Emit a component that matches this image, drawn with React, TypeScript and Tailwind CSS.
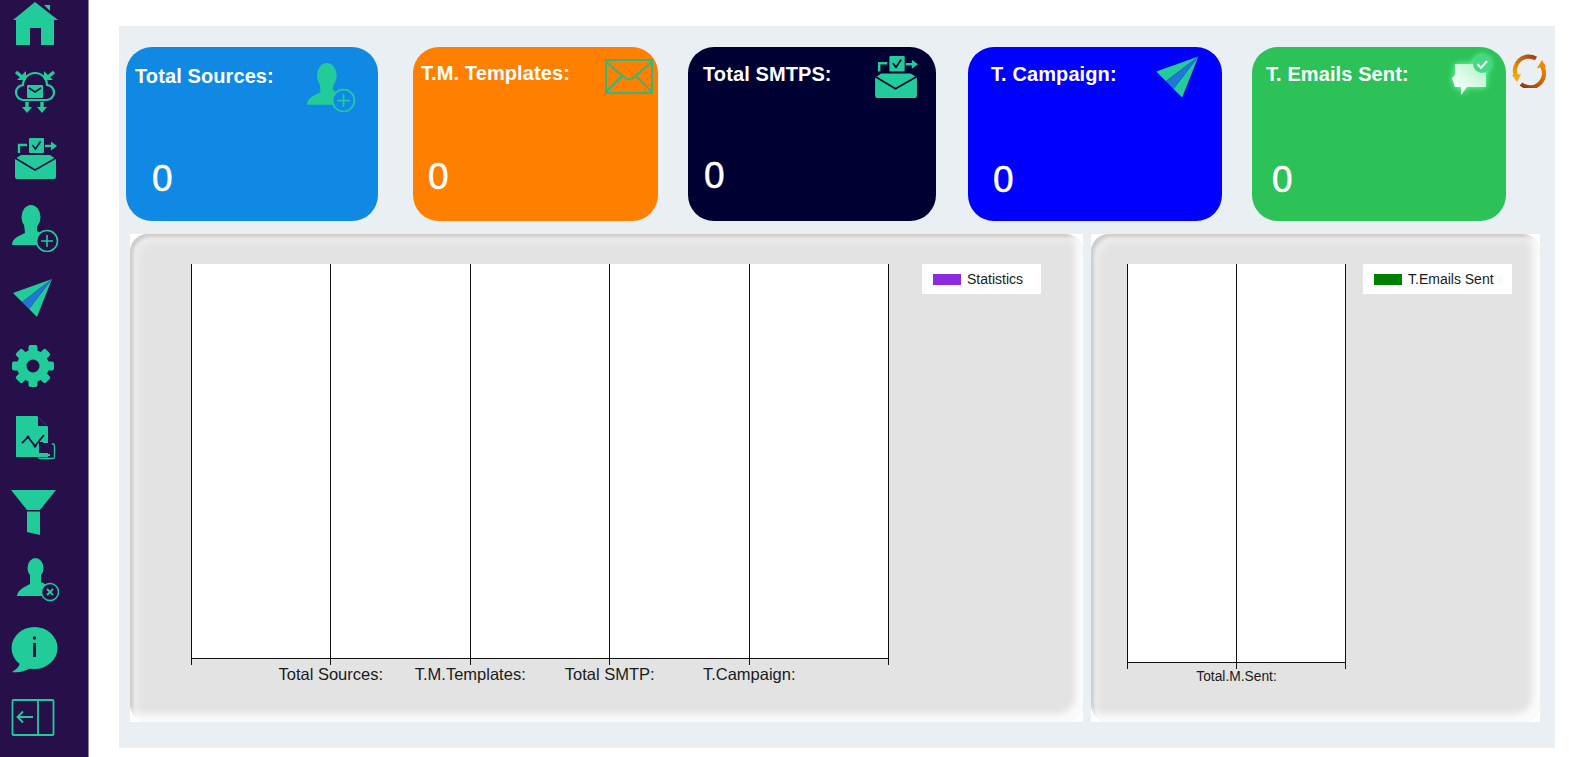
import React from "react";

const GREEN = "#22cc9a";
const SIDE = "#27104a";

type IconProps = { className?: string; cut?: string };

function HomeIcon({ className }: IconProps) {
  return (
    <svg viewBox="0 0 48 48" className={className} fill={GREEN}>
      <path d="M24 3 L47 21 H43 V46 H30 V29 H19 V46 H5 V21 H2 Z" />
      <path d="M33 6 L39 6 L39 12 Z" />
    </svg>
  );
}

function CloudIcon({ className }: IconProps) {
  return (
    <svg viewBox="0 0 48 48" className={className} fill="none" stroke={GREEN} strokeWidth="2.2">
      <path d="M13 33 a7.5 7.5 0 0 1 -1 -15 a12 12 0 0 1 24 0 a7.5 7.5 0 0 1 -1 15 z" />
      <rect x="16" y="18" width="16" height="13" rx="1" fill={GREEN} stroke="none" />
      <path d="M18 21 L24 25 L30 21" stroke={SIDE} strokeWidth="1.6" />
      <path d="M16 35 V41 M31 35 V41" strokeWidth="3.4" />
      <path d="M11 40 H21 L16 46 Z M26 40 H36 L31 46 Z" fill={GREEN} stroke="none" />
      <path d="M5 5 L11 10 M43 5 L37 10" strokeWidth="3.4" />
      <path d="M6 13 H15 V4 Z M42 13 H33 V4 Z" fill={GREEN} stroke="none" />
    </svg>
  );
}

function MailCheckIcon({ className, cut = SIDE }: IconProps) {
  return (
    <svg viewBox="0 0 48 48" className={className} fill="none">
      <path d="M4 25 L10 21 H39 L45 25 V43 a2 2 0 0 1 -2 2 H6 a2 2 0 0 1 -2 -2 Z" fill={GREEN} />
      <path d="M4 24 L24 36 L45 24" stroke={cut} strokeWidth="1.6" />
      <rect x="18" y="4" width="15" height="15" rx="1" fill={GREEN} />
      <path d="M21.5 11 L24.5 15 L29.5 7.5" stroke={cut} strokeWidth="1.6" />
      <path d="M8 19 V11 H16" stroke={GREEN} strokeWidth="2.4" />
      <path d="M34 12 H41" stroke={GREEN} strokeWidth="2.4" />
      <path d="M40 7.5 L46 12 L40 16.5 Z" fill={GREEN} />
    </svg>
  );
}

function UserPlusIcon({ className, cut = SIDE }: IconProps) {
  return (
    <svg viewBox="0 0 48 48" className={className} fill={GREEN}>
      <ellipse cx="20" cy="13" rx="9.5" ry="12" />
      <path d="M13 20 H26 V27 C29 29 32 30 34 32 V41 H1 C1 34 8 32 14 29 Z" />
      <circle cx="36" cy="37" r="10.5" fill={cut} stroke={GREEN} strokeWidth="1.6" />
      <path d="M36 31 V43 M30 37 H42" stroke={GREEN} strokeWidth="1.6" />
    </svg>
  );
}

function PlaneIcon({ className }: IconProps) {
  return (
    <svg viewBox="0 0 48 48" className={className}>
      <path d="M41 5 L2 19 L11 28 Z" fill={GREEN} />
      <path d="M41 5 L18 35 L26 43 Z" fill={GREEN} />
      <path d="M41 5 L11 28 L18 35 Z" fill="#1f78d1" />
    </svg>
  );
}

function GearIcon({ className }: IconProps) {
  const teeth = [0, 45, 90, 135, 180, 225, 270, 315];
  return (
    <svg viewBox="0 0 48 48" className={className}>
      {teeth.map((t) => (
        <rect key={t} x="17.5" y="3" width="9" height="10" rx="2" fill={GREEN} transform={`rotate(${t} 22 24)`} />
      ))}
      <circle cx="22" cy="24" r="16" fill={GREEN} />
      <circle cx="22" cy="24" r="6.5" fill={SIDE} />
    </svg>
  );
}

function ReportIcon({ className }: IconProps) {
  return (
    <svg viewBox="0 0 48 48" className={className} fill="none">
      <path d="M5 2 H26 L37 13 V43 H5 Z" fill={GREEN} />
      <path d="M27 3 L36 12 H27 Z" fill={SIDE} />
      <path d="M11 29 L17 23 L24 32 L33 21" stroke={SIDE} strokeWidth="1.8" />
      <circle cx="17" cy="23" r="1.6" fill={SIDE} />
      <circle cx="24" cy="32" r="1.6" fill={SIDE} />
      <path d="M32 30 H42 a1.5 1.5 0 0 1 1.5 1.5 V43 a1.5 1.5 0 0 1 -1.5 1.5 H29 a1.5 1.5 0 0 1 -1.5 -1.5 V40" stroke={GREEN} strokeWidth="1.3" />
      <rect x="28" y="28" width="4" height="11" fill={SIDE} />
      <rect x="31" y="29" width="10" height="10" fill={SIDE} />
      <rect x="29" y="40" width="10" height="2" fill={GREEN} />
    </svg>
  );
}

function FunnelIcon({ className }: IconProps) {
  return (
    <svg viewBox="0 0 48 48" className={className} fill={GREEN}>
      <path d="M0 2 H45 L29 22 H16 Z" />
      <path d="M16 23.5 H29 V47 L16 44 Z" />
    </svg>
  );
}

function UserXIcon({ className }: IconProps) {
  return (
    <svg viewBox="0 0 48 48" className={className} fill={GREEN}>
      <ellipse cx="24.5" cy="12" rx="8" ry="10" />
      <path d="M19 18 H30 V26 C33 27 35 29 37 30 V40 H6 C7 33 14 31 19 28 Z" />
      <circle cx="39" cy="36" r="8.5" fill={SIDE} stroke={GREEN} strokeWidth="1.4" />
      <path d="M36 33 L42 39 M42 33 L36 39" stroke={GREEN} strokeWidth="1.8" />
    </svg>
  );
}

function InfoIcon({ className }: IconProps) {
  return (
    <svg viewBox="0 0 48 48" className={className} fill={GREEN}>
      <ellipse cx="23.5" cy="23" rx="23" ry="21" />
      <path d="M9 36 C9 41 6 44 1 47 C8 48 16 46 21 42 Z" />
      <circle cx="23.5" cy="13" r="1.7" fill={SIDE} />
      <rect x="22" y="18" width="3" height="14" fill={SIDE} />
    </svg>
  );
}

function CollapseIcon({ className }: IconProps) {
  return (
    <svg viewBox="0 0 48 48" className={className} fill="none" stroke={GREEN} strokeWidth="1.8">
      <rect x="1.5" y="7" width="41" height="35" rx="1" />
      <path d="M27 7 V42" />
      <path d="M22 24 H6.5 M12 18.5 L6.5 24 L12 29.5" />
    </svg>
  );
}

function EnvelopeIcon({ className }: IconProps) {
  return (
    <svg viewBox="0 0 48 35" className={className} fill="none" stroke="#2fb97f" strokeWidth="2">
      <rect x="1" y="1" width="46" height="33" />
      <path d="M1 3 L20 19 Q24 22 28 19 L47 3" />
      <path d="M1 33 L17 17 M47 33 L31 17" />
    </svg>
  );
}

function SentIcon({ className }: IconProps) {
  return (
    <svg viewBox="0 0 42 42" className={`${className} drop-shadow-[0_0_3px_#7dffb0]`}>
      <defs>
        <linearGradient id="bubble" x1="0.1" y1="0.9" x2="0.9" y2="0.1">
          <stop offset="0" stopColor="#ffffff" />
          <stop offset="1" stopColor="#b5f5cc" />
        </linearGradient>
      </defs>
      <path d="M5 9 H36 V32 H17 L11 40 V32 H5 Q3 26 2 23 L5 20 Z" fill="url(#bubble)" />
      <circle cx="32" cy="9" r="9" fill="#47d887" />
      <path d="M27.5 9 L31 13 L37 6" fill="none" stroke="#eafff2" strokeWidth="2" />
    </svg>
  );
}

function RefreshIcon({ className }: IconProps) {
  return (
    <svg viewBox="0 0 34 34" className={className} fill="none">
      <defs>
        <linearGradient id="arcTop" x1="1" y1="0" x2="0" y2="1">
          <stop offset="0" stopColor="#9c3d17" />
          <stop offset="1" stopColor="#f7a900" />
        </linearGradient>
        <linearGradient id="arcBottom" x1="0" y1="1" x2="1" y2="0">
          <stop offset="0" stopColor="#8f3315" />
          <stop offset="1" stopColor="#f58a00" />
        </linearGradient>
      </defs>
      <path d="M24 4.5 A14 14 0 0 0 4 22" stroke="url(#arcTop)" strokeWidth="4.2" />
      <path d="M0 21 L9 20 L5 28 Z" fill="#f7a900" />
      <path d="M9 30 A14 14 0 0 0 30 12" stroke="url(#arcBottom)" strokeWidth="4.2" />
      <path d="M25 14 L34 13 L30 6 Z" fill="#f58a00" />
    </svg>
  );
}

function Sidebar() {
  return (
    <aside className="w-[89px] h-full shrink-0 bg-[#27104a] border-r border-[#8f80a8] flex flex-col pl-[11px]">
      <HomeIcon className="w-12 h-12 -mt-px" />
      <CloudIcon className="w-12 h-12 mt-5" />
      <MailCheckIcon className="w-12 h-12 mt-[19px]" />
      <UserPlusIcon className="w-12 h-12 mt-[22px]" />
      <PlaneIcon className="w-12 h-12 mt-[22px]" />
      <GearIcon className="w-12 h-12 mt-5" />
      <ReportIcon className="w-12 h-12 mt-6" />
      <FunnelIcon className="w-12 h-12 mt-[26px]" />
      <UserXIcon className="w-12 h-12 mt-5" />
      <InfoIcon className="w-12 h-12 mt-[21px]" />
      <CollapseIcon className="w-12 h-12 mt-5" />
    </aside>
  );
}

type CardProps = {
  title: string;
  className: string;
  titleClass: string;
  valueClass: string;
  children: React.ReactNode;
};

function StatCard({ title, className, titleClass, valueClass, children }: CardProps) {
  return (
    <div className={`relative h-[174px] shrink-0 rounded-[26px] text-white flex flex-col justify-between ${className}`}>
      <div className={`text-[20px] tracking-[0.1px] leading-[24px] font-bold whitespace-nowrap ${titleClass}`}>{title}</div>
      <div className={`text-[37px] leading-[42px] [-webkit-text-stroke:0.5px_white] ${valueClass}`}>0</div>
      {children}
    </div>
  );
}

type ChartProps = {
  className: string;
  plotClass: string;
  heightClass: string;
  labelPad: string;
  labelClass: string;
  cells: number;
  labels: string[];
  legend: string;
  legendClass: string;
  swatch: string;
};

function Chart({ className, plotClass, heightClass, labelPad, labelClass, cells, labels, legend, legendClass, swatch }: ChartProps) {
  const cols = Array.from({ length: cells }, (_, i) => i);
  return (
    <div className={`h-[488px] shrink-0 bg-white ${className}`}>
      <div className="h-full rounded-[18px] bg-[#e3e3e3] pt-[30px] flex shadow-[inset_-8px_-8px_6px_#fafafa,inset_3px_3px_3px_#cdcdcd,inset_8px_8px_6px_#ececec]">
        <div className={`shrink-0 ${plotClass}`}>
          <div className={`bg-white flex border-l border-b border-[#111] ${heightClass}`}>
            {cols.map((c) => (
              <div key={c} className="flex-1 border-r border-[#111]" />
            ))}
          </div>
          <div className="h-[6px] flex border-l border-[#111]">
            {cols.map((c) => (
              <div key={c} className="flex-1 border-r border-[#111]" />
            ))}
          </div>
          <div className={`flex text-[#1a1a1a] ${labelPad} ${labelClass}`}>
            {labels.map((l) => (
              <div key={l} className="flex-1 text-center whitespace-nowrap">
                {l}
              </div>
            ))}
          </div>
        </div>
        <div className={`h-[30px] bg-white flex items-center text-[14px] text-[#1a1a1a] whitespace-nowrap ${legendClass}`}>
          <span className={`w-[28px] h-[11px] mr-[6px] ${swatch}`} />
          {legend}
        </div>
      </div>
    </div>
  );
}

export default function App() {
  return (
    <div className="w-[1569px] h-[757px] bg-white flex overflow-hidden font-['Liberation_Sans',Arial,sans-serif]">
      <Sidebar />
      <main className="ml-[30px] mt-[26px] w-[1436px] h-[722px] bg-[#eaeff4]">
        {/* Stat cards */}
        <div className="flex pt-[21px] pl-[7px]">
          <StatCard title="Total Sources:" className="w-[252px] bg-[#1089e5]" titleClass="pl-[9px] pt-[17px]" valueClass="pl-[26px] pb-[21px]">
            <div className="absolute left-[180px] top-[15px]">
              <UserPlusIcon className="w-[50px] h-[50px]" cut="#1089e5" />
            </div>
          </StatCard>
          <StatCard title="T.M. Templates:" className="ml-[35px] w-[245px] bg-[#ff8000]" titleClass="pl-[8px] pt-[14px]" valueClass="pl-[15px] pb-[23px]">
            <div className="absolute left-[192px] top-[12px]">
              <EnvelopeIcon className="w-[48px] h-[35px]" />
            </div>
          </StatCard>
          <StatCard title="Total SMTPS:" className="ml-[30px] w-[248px] bg-[#000033]" titleClass="pl-[15px] pt-[15px]" valueClass="pl-[16px] pb-[24px]">
            <div className="absolute left-[183px] top-[5px]">
              <MailCheckIcon className="w-[49px] h-[49px]" cut="#000033" />
            </div>
          </StatCard>
          <StatCard title="T. Campaign:" className="ml-[32px] w-[254px] bg-[#0000ff]" titleClass="pl-[23px] pt-[15px]" valueClass="pl-[25px] pb-[20px]">
            <div className="absolute left-[186px] top-[4px]">
              <PlaneIcon className="w-[52px] h-[52px]" />
            </div>
          </StatCard>
          <StatCard title="T. Emails Sent:" className="ml-[30px] w-[254px] bg-[#2dc258]" titleClass="pl-[14px] pt-[15px]" valueClass="pl-[20px] pb-[20px]">
            <div className="absolute left-[198px] top-[8px]">
              <SentIcon className="w-[42px] h-[42px]" />
            </div>
          </StatCard>
          <RefreshIcon className="w-[34px] h-[34px] ml-[6px] mt-[7px]" />
        </div>

        {/* Charts */}
        <div className="flex gap-[8px] pl-[11px] mt-[13px]">
          <Chart
            className="w-[953px]"
            plotClass="ml-[61px] w-[698px]"
            heightClass="h-[395px]"
            labelPad="px-[70px]"
            labelClass="text-[16.5px] leading-[18px]"
            cells={5}
            labels={["Total Sources:", "T.M.Templates:", "Total SMTP:", "T.Campaign:"]}
            legend="Statistics"
            legendClass="ml-[33px] w-[119px] pl-[11px]"
            swatch="bg-[#8a2be2]"
          />
          <Chart
            className="w-[449px]"
            plotClass="ml-[36px] w-[219px]"
            heightClass="h-[399px]"
            labelPad="px-[55px]"
            labelClass="text-[13.8px] leading-[16px]"
            cells={2}
            labels={["Total.M.Sent:"]}
            legend="T.Emails Sent"
            legendClass="ml-[17px] w-[149px] pl-[11px]"
            swatch="bg-[#008000]"
          />
        </div>
      </main>
    </div>
  );
}
